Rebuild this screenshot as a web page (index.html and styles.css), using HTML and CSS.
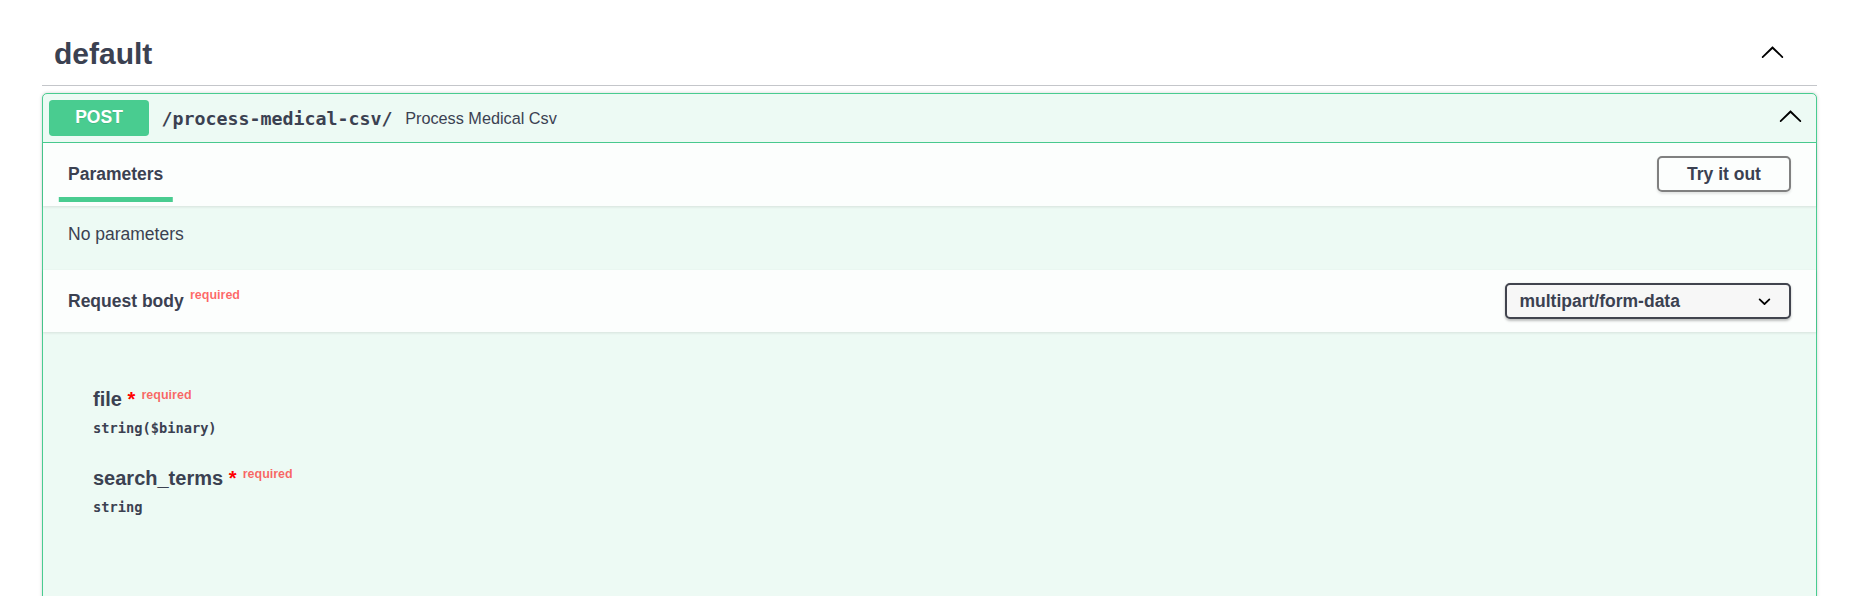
FILE: index.html
```html
<!DOCTYPE html>
<html lang="en">
<head>
<meta charset="utf-8">
<title>default</title>
<link rel="stylesheet" href="styles.css">
</head>
<body>
<div class="wrapper">
  <section class="tag-section">
    <h3 class="tag">
      <span class="tag-name">default</span>
      <button class="expand expand-tag" type="button" aria-label="Collapse tag">
        <svg class="arrow" viewBox="0 0 20 20"><path d="M17.418 14.908c.272.268.709.268.979 0s.272-.701 0-.969l-7.908-7.83a.697.697 0 0 0-.979 0l-7.908 7.83c-.27.268-.27.701 0 .969.271.268.709.268.979 0L10 7.928l7.418 6.98z"/></svg>
      </button>
    </h3>
    <div class="opblock">
      <div class="summary">
        <span class="method">POST</span>
        <span class="path">/process-medical-csv/</span>
        <span class="summary-desc">Process Medical Csv</span>
        <button class="expand expand-op" type="button" aria-label="Collapse operation">
          <svg class="arrow" viewBox="0 0 20 20"><path d="M17.418 14.908c.272.268.709.268.979 0s.272-.701 0-.969l-7.908-7.83a.697.697 0 0 0-.979 0l-7.908 7.830c-.27.268-.27.701 0 .969.271.268.709.268.979 0L10 7.928l7.418 6.98z"/></svg>
        </button>
      </div>
      <div class="ob-body">
        <div class="section-header">
          <div class="tab-header">
            <h4 class="tab-title"><span class="tab-label">Parameters</span></h4>
          </div>
          <button class="btn-try" type="button">Try it out</button>
        </div>
        <div class="desc-wrap"><p>No parameters</p></div>
        <div class="section-header">
          <h4 class="rb-title">Request body<span class="req req-title">required</span></h4>
          <div class="select">
            <span class="select-value">multipart/form-data</span>
            <svg class="select-arrow" viewBox="0 0 20 20"><path d="M13.418 7.859a.695.695 0 0 1 .978 0 .68.68 0 0 1 0 .969l-3.908 3.83a.697.697 0 0 1-.979 0l-3.908-3.830a.68.68 0 0 1 0-.969.695.695 0 0 1 .978 0L10 11l3.418-3.141z"/></svg>
          </div>
        </div>
        <div class="rb-content">
          <div class="param">
            <div class="pname">file<span class="star">&nbsp;*</span><span class="req">required</span></div>
            <div class="ptype">string($binary)</div>
          </div>
          <div class="param">
            <div class="pname">search_terms<span class="star">&nbsp;*</span><span class="req">required</span></div>
            <div class="ptype">string</div>
          </div>
        </div>
      </div>
    </div>
  </section>
</div>
</body>
</html>
```

FILE: styles.css
```css
* {
  box-sizing: border-box;
}

html,
body {
  margin: 0;
}

body {
  height: 596px;
  overflow: hidden;
  background: #fff;
  font-family: "Liberation Sans", Arial, sans-serif;
  color: #3b4151;
}

.wrapper {
  width: 1775px;
  margin-left: 42px;
  padding-top: 22px;
}

/* tag header */
.tag {
  display: flex;
  align-items: center;
  margin: 0 0 7px;
  padding: 12.5px 25px 12.5px 12px;
  border-bottom: 1px solid rgba(59, 65, 81, 0.3);
  font-size: 30px;
  font-weight: 700;
  line-height: 38px;
}

.tag-name {
  flex: 1;
}

.expand {
  display: flex;
  align-items: center;
  justify-content: center;
  margin: 0;
  border: 0;
  background: none;
  cursor: pointer;
}

.expand-tag {
  padding: 0 7.5px 4px;
}

.expand-op {
  padding: 0 7.5px 6px;
}

.arrow {
  display: block;
  width: 25px;
  height: 25px;
  fill: #000;
}

/* operation block */
.opblock {
  border: 1px solid #49cc90;
  border-radius: 5px;
  background: #edfaf4;
  box-shadow: 0 0 3.75px rgba(0, 0, 0, 0.19);
}

.summary {
  display: flex;
  align-items: center;
  padding: 6px;
  border-bottom: 1px solid #49cc90;
}

.method {
  display: flex;
  align-items: center;
  justify-content: center;
  min-width: 100px;
  height: 36px;
  padding-bottom: 2px;
  border-radius: 3.75px;
  background: #49cc90;
  color: #fff;
  font-size: 17.5px;
  font-weight: 700;
  text-shadow: 0 1px 0 rgba(0, 0, 0, 0.1);
}

.path {
  padding: 0 12.5px;
  font-family: "DejaVu Sans Mono", "Liberation Mono", monospace;
  font-size: 18.3px;
  font-weight: 700;
}

.summary-desc {
  flex: 1;
  font-size: 16.25px;
}

/* sections */
.section-header {
  position: relative;
  display: flex;
  align-items: center;
  height: 62.5px;
  padding: 0 25px;
  background: rgba(255, 255, 255, 0.8);
  box-shadow: 0 1.25px 2.5px rgba(0, 0, 0, 0.1);
}

.tab-header {
  flex: 1;
  display: flex;
}

.tab-title {
  margin: 0;
  font-size: 17.5px;
  font-weight: 700;
  line-height: 20px;
}

.tab-label {
  position: relative;
  display: inline-block;
}

.tab-label::after {
  content: "";
  position: absolute;
  left: 50%;
  bottom: -17.5px;
  width: 120%;
  height: 5px;
  transform: translateX(-50%);
  background: #49cc90;
}

.btn-try {
  width: 134px;
  height: 36px;
  padding: 0;
  border: 2px solid #808080;
  border-radius: 5px;
  background: transparent;
  color: #3b4151;
  font-family: "Liberation Sans", Arial, sans-serif;
  font-size: 17.5px;
  font-weight: 700;
  box-shadow: 0 1.25px 2.5px rgba(0, 0, 0, 0.1);
}

.desc-wrap {
  padding: 18.75px 25px 25.65px;
}

.desc-wrap p {
  margin: 0;
  font-size: 17.5px;
  line-height: 20.1px;
}

.rb-title {
  flex: 1;
  margin: 0;
  font-size: 17.5px;
  font-weight: 700;
  line-height: 26px;
}

.req {
  padding: 0 6.25px;
  color: rgba(255, 0, 0, 0.6);
  font-size: 12.5px;
  font-weight: 700;
  line-height: 1;
  vertical-align: 7.5px;
}

.req-title {
  vertical-align: 8.5px;
}

.select {
  display: flex;
  align-items: center;
  width: 286px;
  height: 36px;
  padding: 0 12.5px;
  border: 2px solid #41444e;
  border-radius: 5px;
  background: #f7f7f7;
  box-shadow: 0 1.25px 2.5px rgba(0, 0, 0, 0.25);
  font-size: 17.5px;
  font-weight: 700;
}

.select-value {
  flex: 1;
}

.select-arrow {
  display: block;
  width: 25px;
  height: 25px;
  fill: #000;
}

.rb-content {
  height: 400px;
  padding: 54.8px 0 0 50px;
}

.param + .param {
  margin-top: 23.5px;
}

.pname {
  font-size: 20px;
  font-weight: 700;
  line-height: 25px;
}

.star {
  color: red;
}

.ptype {
  padding: 6.25px 0;
  font-family: "DejaVu Sans Mono", "Liberation Mono", monospace;
  font-size: 13.7px;
  font-weight: 700;
  line-height: 18px;
}
```
